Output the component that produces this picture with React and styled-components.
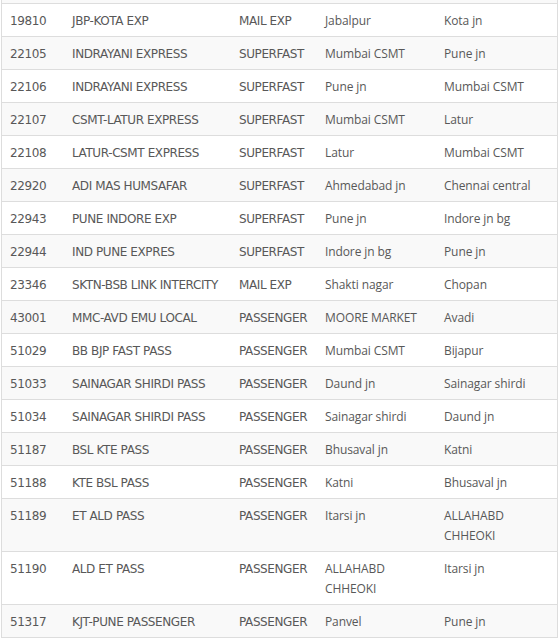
import React from 'react';
import styled, { createGlobalStyle } from 'styled-components';

const GlobalStyle = createGlobalStyle`
  body {
    margin: 0;
    background: #fff;
  }
`;

const Frame = styled.div`
  width: 555px;
  margin-left: 1px;
  border-left: 1px solid #dddddd;
  border-right: 1px solid #dddddd;
`;

const TopStrip = styled.div`
  height: 3px;
  background: #f9f9f9;
`;

const Table = styled.table`
  width: 100%;
  border-collapse: collapse;
  table-layout: fixed;
  color: #585858;
  font-size: 12px;
`;

const Row = styled.tr`
  background: ${(p) => (p.$striped ? '#f9f9f9' : '#ffffff')};
  border-top: 1px solid #dddddd;
  &:last-child {
    border-bottom: 1px solid #dddddd;
  }
`;

const Cell = styled.td`
  padding: 7px 8px 5px;
  line-height: 20px;
  vertical-align: top;
  font-family: ${(p) =>
    p.$round ? '"Open Sans", "Noto Sans", sans-serif' : '"DejaVu Sans", Verdana, sans-serif'};
  font-size: 12px;
  letter-spacing: ${(p) => (p.$round ? '-0.1px' : '-0.4px')};
`;

const trains = [
  ['19810', 'JBP-KOTA EXP', 'MAIL EXP', 'Jabalpur', 'Kota jn'],
  ['22105', 'INDRAYANI EXPRESS', 'SUPERFAST', 'Mumbai CSMT', 'Pune jn'],
  ['22106', 'INDRAYANI EXPRESS', 'SUPERFAST', 'Pune jn', 'Mumbai CSMT'],
  ['22107', 'CSMT-LATUR EXPRESS', 'SUPERFAST', 'Mumbai CSMT', 'Latur'],
  ['22108', 'LATUR-CSMT EXPRESS', 'SUPERFAST', 'Latur', 'Mumbai CSMT'],
  ['22920', 'ADI MAS HUMSAFAR', 'SUPERFAST', 'Ahmedabad jn', 'Chennai central'],
  ['22943', 'PUNE INDORE EXP', 'SUPERFAST', 'Pune jn', 'Indore jn bg'],
  ['22944', 'IND PUNE EXPRES', 'SUPERFAST', 'Indore jn bg', 'Pune jn'],
  ['23346', 'SKTN-BSB LINK INTERCITY', 'MAIL EXP', 'Shakti nagar', 'Chopan'],
  ['43001', 'MMC-AVD EMU LOCAL', 'PASSENGER', 'MOORE MARKET', 'Avadi'],
  ['51029', 'BB BJP FAST PASS', 'PASSENGER', 'Mumbai CSMT', 'Bijapur'],
  ['51033', 'SAINAGAR SHIRDI PASS', 'PASSENGER', 'Daund jn', 'Sainagar shirdi'],
  ['51034', 'SAINAGAR SHIRDI PASS', 'PASSENGER', 'Sainagar shirdi', 'Daund jn'],
  ['51187', 'BSL KTE PASS', 'PASSENGER', 'Bhusaval jn', 'Katni'],
  ['51188', 'KTE BSL PASS', 'PASSENGER', 'Katni', 'Bhusaval jn'],
  ['51189', 'ET ALD PASS', 'PASSENGER', 'Itarsi jn', 'ALLAHABD CHHEOKI'],
  ['51190', 'ALD ET PASS', 'PASSENGER', 'ALLAHABD CHHEOKI', 'Itarsi jn'],
  ['51317', 'KJT-PUNE PASSENGER', 'PASSENGER', 'Panvel', 'Pune jn'],
];

const widths = [62, 167, 86, 119, 121];

export default function App() {
  return (
    <>
      <GlobalStyle />
      <Frame>
        <TopStrip />
        <Table>
          <colgroup>
            {widths.map((w, i) => (
              <col key={i} style={{ width: w }} />
            ))}
          </colgroup>
          <tbody>
            {trains.map((t, i) => (
              <Row key={t[0]} $striped={i % 2 === 1}>
                <Cell>{t[0]}</Cell>
                <Cell>{t[1]}</Cell>
                <Cell>{t[2]}</Cell>
                <Cell $round>{t[3]}</Cell>
                <Cell $round>{t[4]}</Cell>
              </Row>
            ))}
          </tbody>
        </Table>
      </Frame>
    </>
  );
}
